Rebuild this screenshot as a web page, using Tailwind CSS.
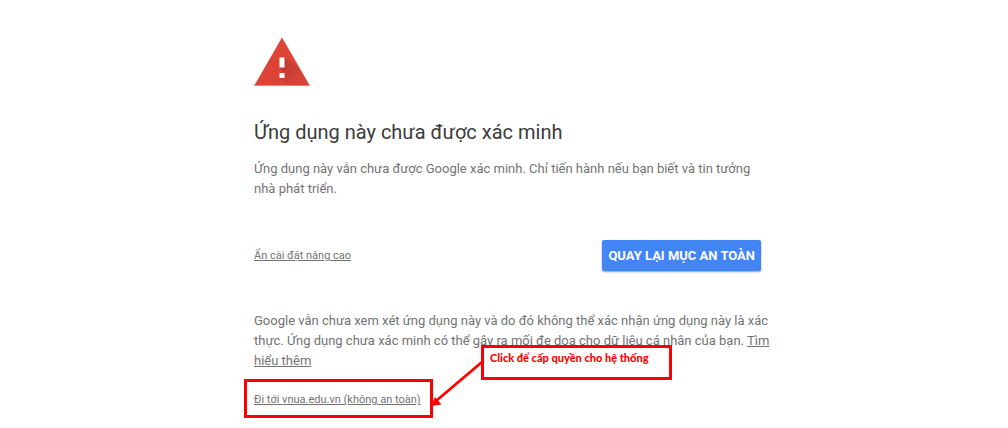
<!DOCTYPE html>
<html lang="vi">
<head>
<meta charset="utf-8">
<meta name="viewport" content="width=device-width, initial-scale=1">
<title>Ứng dụng này chưa được xác minh</title>
<script src="https://cdn.jsdelivr.net/npm/@tailwindcss/browser@4"></script>
</head>
<body class="min-h-screen bg-white pl-2 font-['Roboto',sans-serif] text-[13px] leading-5 text-[#737373]">
<main class="relative mx-auto max-w-[508px] pt-[37px] pb-4">
  <svg class="block h-[49px] w-14" viewBox="0 0 56 49" aria-hidden="true">
    <defs>
      <linearGradient id="shade" gradientUnits="userSpaceOnUse" x1="28" y1="26" x2="44" y2="42">
        <stop offset="0" stop-color="#000" stop-opacity=".14"/>
        <stop offset="1" stop-color="#000" stop-opacity=".02"/>
      </linearGradient>
    </defs>
    <path d="M28 .5 56 49H0Z" fill="#db4437"/>
    <path d="M30.500 20.500 47 33 55.400 48H33L25.500 41 30.500 36 25.500 30.500Z" fill="url(#shade)"/>
    <path d="M0 49 .6 48H55.400L56 49Z" fill="#ee8077"/>
    <path d="M25.500 20.500h5v10h-5zM25.500 36h5v5h-5z" fill="#fff"/>
  </svg>
  <h1 class="mt-8 text-xl leading-7 text-[#3c3c3c]">Ứng dụng này chưa được xác minh</h1>
  <p class="mt-[13px]">Ứng dụng này vẫn chưa được Google xác minh. Chỉ tiến hành nếu bạn biết và tin tưởng nhà phát triển.</p>
  <div class="mt-[41px] flex items-center justify-between">
    <a href="#advanced" class="text-[11px] underline">Ẩn cài đặt nâng cao</a>
    <button type="button" class="mr-px h-[31px] rounded-xs bg-[#4285f4] px-[6px] text-[13px] font-bold text-white shadow-[0_1px_2px_rgba(0,0,0,0.4)]">QUAY LẠI MỤC AN TOÀN</button>
  </div>
  <section id="advanced" class="mt-10">
    <p class="sm:whitespace-nowrap">Google vẫn chưa xem xét ứng dụng này và do đó không thể xác nhận ứng dụng này là xác<br class="hidden sm:inline">
      thực. Ứng dụng chưa xác minh có thể gây ra mối đe dọa cho dữ liệu cá nhân của bạn. <a href="#more" class="underline">Tìm<br class="hidden sm:inline">
      hiểu thêm</a></p>
    <div class="mt-[18px]"><a href="#continue" class="text-[11px] underline">Đi tới vnua.edu.vn (không an toàn)</a></div>
  </section>

  <!-- Instruction markers over the page -->
  <div class="absolute top-[379px] -left-[10px] h-[39px] w-[189px] border-3 border-[#f00]"></div>
  <div class="absolute top-[345px] left-[227px] h-[35px] w-[191px] border-3 border-[#f00] bg-white px-[6px] font-['Lato',sans-serif] text-[11px] font-black text-[#f00]">Click để cấp quyền cho hệ thống</div>
  <svg class="absolute top-[360px] left-[176px] h-[50px] w-[54px]" viewBox="0 0 54 50" aria-hidden="true">
    <path d="M52 2 6 41" stroke="#f00" stroke-width="2.800" fill="none"/>
    <path d="M1 46 5 37 11.500 44.500Z" fill="#f00"/>
  </svg>
</main>
</body>
</html>
